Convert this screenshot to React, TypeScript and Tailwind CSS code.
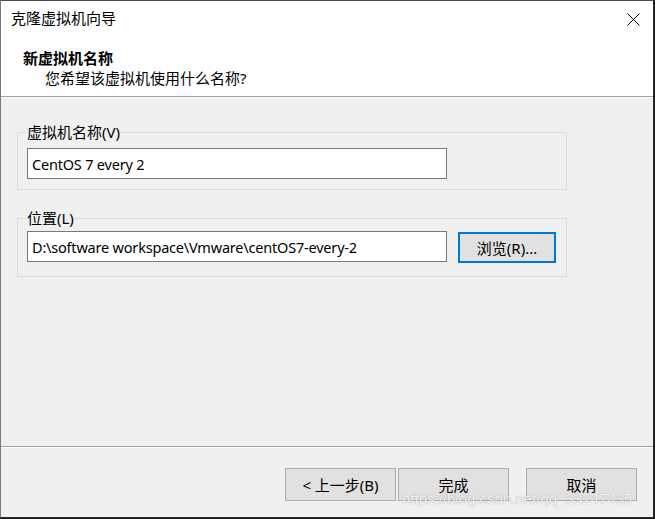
const font = "font-['Noto_Sans','Noto_Sans_CJK_SC',sans-serif]";

function WinButton({ label, focused = false }: { label: string; focused?: boolean }) {
  return (
    <button
      className={
        focused
          ? 'h-[31px] w-[98px] border-2 border-[#0078d7] bg-[#e1e1e1] text-[15px] leading-[20px] text-black'
          : 'h-[33px] w-[111px] border border-[#adadad] bg-[#e1e1e1] text-[15px] leading-[20px] text-black'
      }
    >
      {label}
    </button>
  );
}

function Group({ label, children, className }: { label: string; children: React.ReactNode; className: string }) {
  return (
    <fieldset className={`w-[550px] border border-[#dcdcdc] pl-[9px] ${className}`}>
      <legend className="-ml-[1px] px-[1px] text-[15px] leading-[20px] text-black">{label}</legend>
      {children}
    </fieldset>
  );
}

function TextBox({ value }: { value: string }) {
  return (
    <div className="flex h-[31px] w-[420px] items-center border border-[#7a7a7a] bg-white pl-[4px] text-[14.5px] leading-[20px] tracking-[-0.2px] text-black">
      {value}
    </div>
  );
}

export default function App() {
  return (
    <div className={`relative h-[519px] w-[655px] bg-[#1a1a1a] ${font}`}>
      <div className="flex h-[518px] w-[654px] flex-col border-t border-l border-r border-b border-t-[#4d4d4d] border-l-[#7a7a7a] border-r-[#2b2b2b] border-b-[#2b2b2b] bg-white">
        {/* title + header */}
        <div className="h-[96px] border-b border-[#a0a0a0] bg-white">
          <div className="flex h-[34px] items-center justify-between pl-[10px] pr-[13px]">
            <span className="text-[15px] leading-[20px] text-black">克隆虚拟机向导</span>
            <svg width="13" height="13" viewBox="0 0 13 13" className="mt-[2px]">
              <path d="M0.5 0.5 L12.5 12.5 M12.5 0.5 L0.5 12.5" stroke="#000" strokeWidth="1" fill="none" />
            </svg>
          </div>
          <div className="pt-[13px]">
            <div className="pl-[22px] text-[15px] font-bold leading-[20px] text-black">新虚拟机名称</div>
            <div className="pl-[44px] text-[15px] leading-[20px] text-black">您希望该虚拟机使用什么名称?</div>
          </div>
        </div>
        <div className="h-px bg-white" />

        {/* body */}
        <div className="flex-1 bg-[#f0f0f0] px-[16px]">
          <Group label="虚拟机名称(V)" className="mt-[24px] pb-[10px]">
            <div className="mt-[6px]">
              <TextBox value="CentOS 7 every 2" />
            </div>
          </Group>
          <Group label="位置(L)" className="mt-[18px] pb-[13px]">
            <div className="mt-[3px] flex items-start gap-[11px]">
              <TextBox value="D:\software workspace\Vmware\centOS7-every-2" />
              <div className="pt-px">
                <WinButton label="浏览(R)..." focused />
              </div>
            </div>
          </Group>
        </div>

        {/* footer */}
        <div className="h-[71px] border-t border-[#a0a0a0] bg-[#f0f0f0]">
          <div className="h-px bg-white" />
          <div className="flex justify-end pr-[16px] pt-[20px]">
            <WinButton label="< 上一步(B)" />
            <div className="ml-[2px]">
              <WinButton label="完成" />
            </div>
            <div className="ml-[17px]">
              <WinButton label="取消" />
            </div>
          </div>
        </div>
      </div>

      <div className="pointer-events-none absolute left-[402px] top-[489px] font-['Liberation_Sans',sans-serif] text-[15px] leading-[20px] text-white/90 [text-shadow:0_0_1px_rgba(90,90,90,0.7)]">
        https://blog.csdn.net/qq_33247435
      </div>
    </div>
  );
}
